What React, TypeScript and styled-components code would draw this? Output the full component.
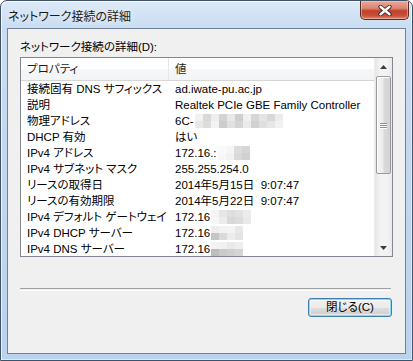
import React from 'react'
import styled, { createGlobalStyle } from 'styled-components'

const GlobalStyle = createGlobalStyle`
  html, body {
    margin: 0;
    padding: 0;
    background: #ffffff;
  }
  body {
    font-family: "Liberation Sans", "Noto Sans CJK JP", sans-serif;
    font-feature-settings: "palt" 1;
    color: #000;
  }
`

type Row = {
  name: string
  value: string
  mosaic?: string[][]
}

const rows: Row[] = [
  { name: '接続固有 DNS サフィックス', value: 'ad.iwate-pu.ac.jp' },
  { name: '説明', value: 'Realtek PCIe GBE Family Controller' },
  {
    name: '物理アドレス',
    value: '6C-',
    mosaic: [
      ['#f2f2f2', '#d9d9d9', '#eeeeee', '#d3d3d3', '#e9e9e9', '#cfcfcf', '#f0f0f0', '#d6d6d6', '#e4e4e4', '#d8d8d8', '#ececec'],
      ['#e8e8e8', '#dddddd', '#f3f3f3', '#cdcdcd', '#e0e0e0', '#d4d4d4', '#ebebeb', '#d1d1d1', '#dfdfdf', '#e6e6e6', '#f1f1f1'],
    ],
  },
  { name: 'DHCP 有効', value: 'はい' },
  {
    name: 'IPv4 アドレス',
    value: '172.16.:',
    mosaic: [
      ['#fafafa', '#f6f6f6', '#dcdcdc', '#d6d6d6'],
      ['#f7f7f7', '#f2f2f2', '#d9d9d9', '#d0d0d0'],
    ],
  },
  { name: 'IPv4 サブネット マスク', value: '255.255.254.0' },
  { name: 'リースの取得日', value: '2014年5月15日  9:07:47' },
  { name: 'リースの有効期限', value: '2014年5月22日  9:07:47' },
  {
    name: 'IPv4 デフォルト ゲートウェイ',
    value: '172.16',
    mosaic: [
      ['#f4f4f4', '#e6e6e6', '#dedede', '#e2e2e2', '#ececec'],
      ['#f6f6f6', '#ececec', '#d8d8d8', '#dcdcdc', '#e9e9e9'],
    ],
  },
  {
    name: 'IPv4 DHCP サーバー',
    value: '172.16',
    mosaic: [
      ['#eeeeee', '#f2f2f2', '#f4f4f4', '#e8e8e8'],
      ['#c6c6c6', '#dadada', '#ececec', '#e4e4e4'],
    ],
  },
  {
    name: 'IPv4 DNS サーバー',
    value: '172.16',
    mosaic: [
      ['#f3f3f3', '#f1f1f1', '#e9e9e9', '#eeeeee'],
      ['#bdbdbd', '#cacaca', '#cfcfcf', '#d5d5d5'],
    ],
  },
]

export default function App() {
  return (
    <>
      <GlobalStyle />
      <Window>
        <TitleBar>
          <Title>ネットワーク接続の詳細</Title>
          <CloseButton aria-label="閉じる">
            <svg width="14" height="11" viewBox="0 0 14 11">
              <path
                d="M2.5 1.8 L11.5 9.2 M11.5 1.8 L2.5 9.2"
                stroke="#3a2424"
                strokeWidth="4.2"
                strokeLinecap="round"
              />
              <path
                d="M2.5 1.8 L11.5 9.2 M11.5 1.8 L2.5 9.2"
                stroke="#ffffff"
                strokeWidth="2.4"
                strokeLinecap="round"
              />
            </svg>
          </CloseButton>
        </TitleBar>
        <Client>
          <FieldLabel>ネットワーク接続の詳細(D):</FieldLabel>
          <ListBox>
            <ListBody>
              <HeaderRow>
                <HeaderCell $width={148}>プロパティ</HeaderCell>
                <HeaderCell>値</HeaderCell>
              </HeaderRow>
              {rows.map((r) => (
                <ItemRow key={r.name}>
                  <NameCell>{r.name}</NameCell>
                  <ValueCell>
                    {r.value}
                    {r.mosaic && (
                      <Mosaic $cols={r.mosaic[0].length}>
                        {r.mosaic.flat().map((c, i) => (
                          <MosaicCell key={i} $shade={c} />
                        ))}
                      </Mosaic>
                    )}
                  </ValueCell>
                </ItemRow>
              ))}
            </ListBody>
            <ScrollBar>
              <ArrowButton>
                <svg width="7" height="4" viewBox="0 0 7 4">
                  <path d="M0 4 L3.5 0 L7 4 Z" fill="#3c3c3c" />
                </svg>
              </ArrowButton>
              <Track>
                <Thumb>
                  <Grip />
                  <Grip />
                  <Grip />
                </Thumb>
              </Track>
              <ArrowButton>
                <svg width="7" height="4" viewBox="0 0 7 4">
                  <path d="M0 0 L7 0 L3.5 4 Z" fill="#3c3c3c" />
                </svg>
              </ArrowButton>
            </ScrollBar>
          </ListBox>
          <Separator />
          <ButtonRow>
            <DialogButton>閉じる(C)</DialogButton>
          </ButtonRow>
        </Client>
      </Window>
    </>
  )
}

const Window = styled.div`
  width: 413px;
  height: 361px;
  box-sizing: border-box;
  border: 1px solid #3f5268;
  border-radius: 7px 7px 0 0;
  background: linear-gradient(180deg, #dce9f7 0px, #c9dcf1 28px, #b9d2ee 100%);
  box-shadow: inset 1px 1px 0 rgba(255, 255, 255, 0.7), inset -1px -1px 0 rgba(255, 255, 255, 0.5);
  padding: 0 6px 6px;
  display: flex;
  flex-direction: column;
  overflow: hidden;
`

const TitleBar = styled.div`
  height: 27px;
  display: flex;
  align-items: flex-start;
  justify-content: space-between;
  margin-right: -3px;
`

const Title = styled.div`
  margin-top: 8px;
  padding-left: 1px;
  font-size: 12px;
  line-height: 16px;
  color: #1b1b1b;
  text-shadow: 0 0 6px rgba(255, 255, 255, 0.9);
`

const CloseButton = styled.div`
  width: 49px;
  height: 19px;
  box-sizing: border-box;
  border: 1px solid #5a2a24;
  border-top: none;
  border-radius: 0 0 5px 5px;
  background: linear-gradient(180deg, #e9a897 0%, #dc8672 40%, #c2402a 55%, #c84f38 80%, #de8466 100%);
  box-shadow: inset 0 0 0 1px rgba(255, 220, 210, 0.45);
  display: flex;
  align-items: center;
  justify-content: center;
`

const Client = styled.div`
  flex: 1;
  border: 1px solid #6f8298;
  background: #f0f0f0;
  padding: 11px 12px 0;
  display: flex;
  flex-direction: column;
`

const FieldLabel = styled.div`
  font-size: 11.5px;
  line-height: 14px;
  color: #000;
`

const ListBox = styled.div`
  margin-top: 3px;
  height: 200px;
  box-sizing: border-box;
  border: 1px solid #828790;
  background: #ffffff;
  display: flex;
  overflow: hidden;
`

const ListBody = styled.div`
  flex: 1;
  overflow: hidden;
`

const HeaderRow = styled.div`
  height: 22px;
  display: flex;
  border-bottom: 1px solid #d5d5d5;
  background: linear-gradient(180deg, #ffffff 0%, #ffffff 50%, #f6f7f8 51%, #f3f4f6 100%);
`

const HeaderCell = styled.div<{ $width?: number }>`
  ${({ $width }) => ($width ? `width: ${$width}px; border-right: 1px solid #e3e8ee;` : 'flex: 1;')}
  padding-left: 6px;
  box-sizing: border-box;
  font-size: 11.5px;
  line-height: 22px;
  color: #1e1e1e;
  white-space: nowrap;
`

const ItemRow = styled.div`
  height: 16px;
  display: flex;
  font-size: 11.5px;
  line-height: 16px;
  white-space: pre;
`

const NameCell = styled.div`
  width: 148px;
  padding-left: 6px;
  box-sizing: border-box;
  overflow: hidden;
`

const ValueCell = styled.div`
  flex: 1;
  padding-left: 6px;
  display: flex;
  align-items: center;
`

const Mosaic = styled.span<{ $cols: number }>`
  display: inline-grid;
  grid-template-columns: repeat(${({ $cols }) => $cols}, 8px);
  grid-auto-rows: 7px;
  margin-left: 1px;
  filter: blur(0.6px);
`

const MosaicCell = styled.span<{ $shade: string }>`
  background: ${({ $shade }) => $shade};
`

const ScrollBar = styled.div`
  width: 17px;
  display: flex;
  flex-direction: column;
  background: linear-gradient(90deg, #e6e6e6 0%, #f3f3f3 30%, #f3f3f3 70%, #e9e9e9 100%);
  border-left: 1px solid #ededed;
`

const ArrowButton = styled.div`
  height: 17px;
  display: flex;
  align-items: center;
  justify-content: center;
`

const Track = styled.div`
  flex: 1;
  padding-top: 1px;
`

const Thumb = styled.div`
  height: 98px;
  margin: 0 1px;
  box-sizing: border-box;
  border: 1px solid #9a9a9a;
  border-radius: 2px;
  background: linear-gradient(90deg, #f4f4f4 0%, #ececec 45%, #dadada 55%, #d3d3d3 100%);
  box-shadow: inset 1px 1px 0 #ffffff;
  display: flex;
  flex-direction: column;
  align-items: center;
  justify-content: center;
  gap: 1px;
`

const Grip = styled.div`
  width: 7px;
  height: 1px;
  background: #8d8d8d;
  box-shadow: 0 1px 0 #ffffff;
`

const Separator = styled.div`
  margin-top: 31px;
  height: 1px;
  border-top: 1px solid #a0a0a0;
  border-bottom: 1px solid #ffffff;
  margin-right: 2px;
`

const ButtonRow = styled.div`
  margin-top: 7px;
  display: flex;
  justify-content: flex-end;
  padding-right: 1px;
`

const DialogButton = styled.div`
  width: 84px;
  height: 19px;
  box-sizing: border-box;
  border: 1px solid #3c7fb1;
  border-radius: 3px;
  background: linear-gradient(180deg, #f2f2f2 0%, #ebebeb 50%, #dddddd 51%, #cfcfcf 100%);
  box-shadow: inset 0 0 0 1px #8ad6f7, inset 0 0 0 2px rgba(255, 255, 255, 0.5);
  font-size: 11.5px;
  line-height: 17px;
  text-align: center;
  color: #000;
`
